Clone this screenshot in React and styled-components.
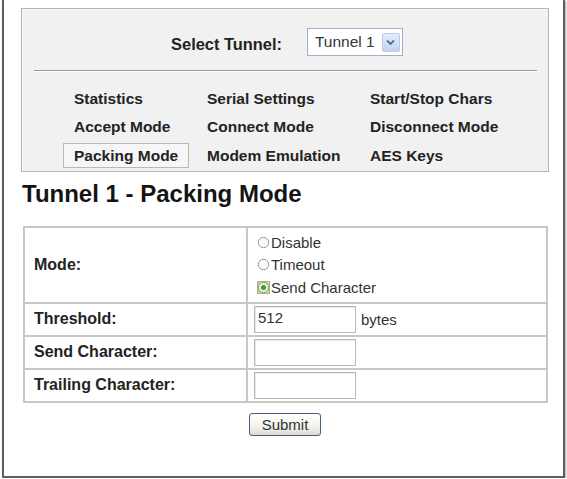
import styled, { createGlobalStyle } from 'styled-components';

const Global = createGlobalStyle`
  html, body { margin: 0; padding: 0; background: #fff; }
  body { font-family: "Liberation Sans", Arial, sans-serif; color: #1e1e1e; }
`

const Frame = styled.div`
  box-sizing: border-box;
  margin-left: 2px;
  width: 563px;
  height: 478px;
  border: 2px solid #5e5e5e;
  border-top: none;
  box-shadow: 1px 1px 2px rgba(0, 0, 0, 0.35);
  padding: 8px 0 0 17px;
`

const Panel = styled.div`
  box-sizing: border-box;
  width: 528px;
  height: 164px;
  background: #f1f1f1;
  border: 1px solid #b4b4b4;
  box-shadow: inset 1px 1px 0 #fafafa;
  padding-top: 19px;
`

const SelectRow = styled.div`
  display: flex;
  align-items: center;
  justify-content: center;
  gap: 25px;
  padding-left: 4px;
  height: 28px;
`

const SelectLabel = styled.span`
  font-size: 16.4px;
  font-weight: bold;
  color: #222;
  margin-top: 5px;
`

const SelectBox = styled.div`
  box-sizing: border-box;
  width: 96px;
  height: 28px;
  border: 1px solid #9cb2cc;
  background: #fff;
  display: flex;
  align-items: center;
  justify-content: space-between;
  padding: 0 2px 0 7px;
  font-size: 15.5px;
  color: #333;
`

const ArrowButton = styled.span`
  width: 16px;
  height: 17px;
  border-radius: 2px;
  background: linear-gradient(#e4ecfb, #c4d4f2);
  border: 1px solid #b9c9e8;
  display: flex;
  align-items: center;
  justify-content: center;
`

const Divider = styled.hr`
  margin: 14px 11px 0 12px;
  border: none;
  border-top: 1px solid #9a9a9a;
  border-bottom: 1px solid #fdfdfd;
  height: 0;
`

const LinkGrid = styled.div`
  display: grid;
  grid-template-columns: 133px 163px auto;
  row-gap: 3.5px;
  margin: 14px 0 0 41px;
`

const NavLink = styled.span`
  box-sizing: border-box;
  height: 25px;
  display: flex;
  align-items: center;
  justify-self: start;
  padding: 0 10px;
  font-size: 15.5px;
  font-weight: bold;
  color: #232323;
  border: 1px solid ${({ active }) => (active ? '#b9b9b9' : 'transparent')};
  background: ${({ active }) => (active ? '#f6f6f6' : 'transparent')};
`

const Heading = styled.h2`
  margin: 8px 0 18px 1px;
  font-size: 24px;
  line-height: 28px;
  font-weight: bold;
  color: #141414;
`

const Table = styled.table`
  margin-left: 2px;
  width: 525px;
  border-collapse: collapse;
  border: 2px solid #c2c2c2;
`

const LabelCell = styled.td`
  width: 204px;
  border: 2px solid #c7c7c7;
  padding: 2px 8px 2px 9px;
  font-size: 16px;
  font-weight: bold;
  color: #232323;
`

const ValueCell = styled.td`
  border: 2px solid #c7c7c7;
  padding: ${({ tall }) => (tall ? '3px 9px 3px' : '2px 6px')};
  font-size: 15px;
  color: #333;
`

const Option = styled.div`
  display: flex;
  align-items: center;
  height: 22.5px;
  gap: 1px;
`

const InputLine = styled.div`
  display: flex;
  align-items: center;
  gap: 5px;
`

const TextBox = styled.input`
  box-sizing: border-box;
  width: 102px;
  height: 27px;
  border: 1px solid #b2b9c2;
  box-shadow: inset 1px 1px 0 #e8e8e8;
  padding: 0 3px 4px;
  font-family: "Liberation Sans", Arial, sans-serif;
  font-size: 15px;
  color: #333;
  outline: none;
`

const ButtonRow = styled.div`
  display: flex;
  justify-content: center;
  margin-top: 10px;
  padding-right: 14px;
`

const SubmitButton = styled.button`
  box-sizing: border-box;
  width: 72px;
  height: 23px;
  border: 1px solid #47607a;
  border-radius: 3px;
  background: linear-gradient(#ffffff, #f2f1ec 60%, #dcdad2);
  font-family: "Liberation Sans", Arial, sans-serif;
  font-size: 15px;
  color: #333;
  padding: 0;
`

const Radio = ({ checked }) => (
  <svg width="13" height="13" viewBox="0 0 13 13">
    {checked && (
      <rect x="0.5" y="0.5" width="12" height="12" fill="#c9d98e" stroke="#6f7a3a" strokeDasharray="1 1" />
    )}
    <circle cx="6.5" cy="6.5" r="5.2" fill={checked ? '#e9f1d4' : '#fbfbfb'} stroke="#8c96a2" strokeWidth="1" />
    {checked && <circle cx="6.5" cy="6.5" r="2.5" fill="#3f9a2d" />}
  </svg>
)

const Chevron = () => (
  <svg width="9" height="7" viewBox="0 0 9 7">
    <path d="M1 1.5 L4.5 5 L8 1.5" fill="none" stroke="#4d6fb0" strokeWidth="1.8" />
  </svg>
)

const links = [
  ['Statistics', 'Serial Settings', 'Start/Stop Chars'],
  ['Accept Mode', 'Connect Mode', 'Disconnect Mode'],
  ['Packing Mode', 'Modem Emulation', 'AES Keys'],
]

export default function App() {
  return (
    <>
      <Global />
      <Frame>
        <Panel>
          <SelectRow>
            <SelectLabel>Select Tunnel:</SelectLabel>
            <SelectBox>
              Tunnel 1
              <ArrowButton><Chevron /></ArrowButton>
            </SelectBox>
          </SelectRow>
          <Divider />
          <LinkGrid>
            {links.flat().map((l) => (
              <NavLink key={l} active={l === 'Packing Mode'}>{l}</NavLink>
            ))}
          </LinkGrid>
        </Panel>

        <Heading>Tunnel 1 - Packing Mode</Heading>

        <Table>
          <tbody>
            <tr>
              <LabelCell>Mode:</LabelCell>
              <ValueCell tall>
                <Option><Radio />Disable</Option>
                <Option><Radio />Timeout</Option>
                <Option><Radio checked />Send Character</Option>
              </ValueCell>
            </tr>
            <tr>
              <LabelCell>Threshold:</LabelCell>
              <ValueCell>
                <InputLine>
                  <TextBox defaultValue="512" />
                  bytes
                </InputLine>
              </ValueCell>
            </tr>
            <tr>
              <LabelCell>Send Character:</LabelCell>
              <ValueCell><TextBox /></ValueCell>
            </tr>
            <tr>
              <LabelCell>Trailing Character:</LabelCell>
              <ValueCell><TextBox /></ValueCell>
            </tr>
          </tbody>
        </Table>

        <ButtonRow>
          <SubmitButton>Submit</SubmitButton>
        </ButtonRow>
      </Frame>
    </>
  );
}
